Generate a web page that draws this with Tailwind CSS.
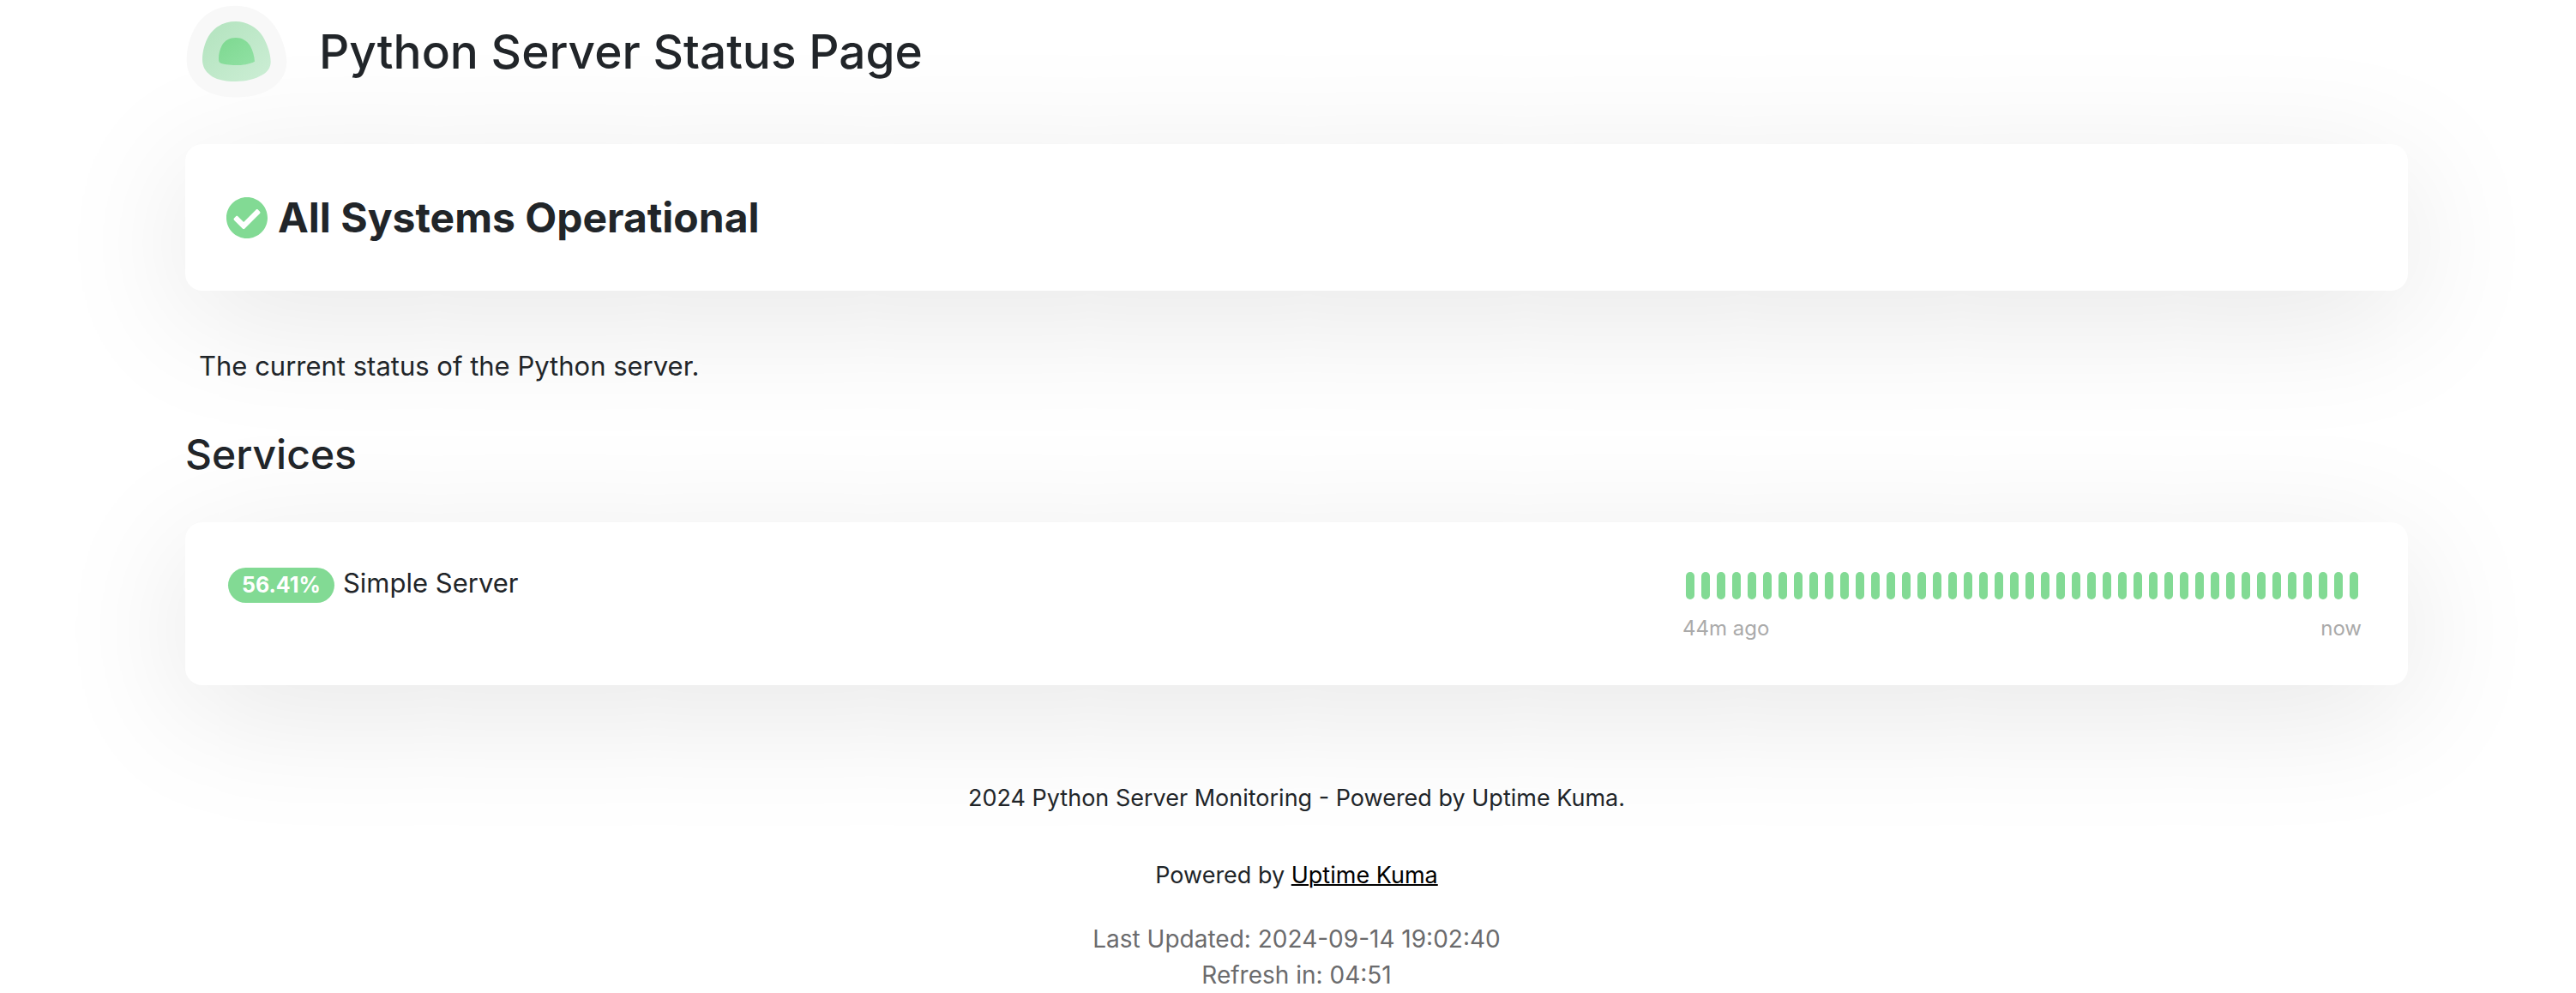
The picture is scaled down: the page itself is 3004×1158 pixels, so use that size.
<!DOCTYPE html>
<html lang="en">
<head>
<meta charset="utf-8">
<meta name="viewport" content="width=device-width, initial-scale=1">
<title>Python Server Status Page</title>
<script src="https://cdn.jsdelivr.net/npm/@tailwindcss/browser@4"></script>
</head>
<body class="bg-white text-[#212529] font-['Inter','Liberation_Sans',sans-serif] pl-5">
<div class="mx-auto max-w-[2640px] px-6">
  <header class="flex items-center gap-9">
    <svg class="size-[120px] shrink-0" viewBox="48 0 360 360" role="img" aria-label="Logo">
      <defs>
        <linearGradient id="mid" x1="0" y1="0" x2="1" y2="1"><stop offset="0.2" stop-color="#b7e5c2"/><stop offset="0.9" stop-color="#caedd3"/></linearGradient>
        <linearGradient id="core" x1="0" y1="0" x2="1" y2="1"><stop offset="0.1" stop-color="#7fd992"/><stop offset="0.9" stop-color="#8fe0a2"/></linearGradient>
      </defs>
      <path fill="#f8f8f8" d="M225 20C280 20 330 45 362 92C385 125 403 180 403 215C403 262 376 295 340 315C305 335 265 340 225 340C165 340 115 326 82 288C62 265 53 240 53 210C53 165 65 125 85 92C118 42 165 20 225 20Z"/>
      <path fill="url(#mid)" d="M225 75C262 75 300 95 320 128C336 155 347 190 347 216C347 236 336 252 318 262C292 278 258 285 225 285C190 285 158 280 136 263C117 249 108 232 108 208C108 180 117 148 130 126C151 92 185 75 225 75Z"/>
      <path fill="url(#core)" d="M225 132C246 132 264 142 275 160C284 176 290 197 291 215C272 225 248 228 225 228C202 228 182 226 170 220C166 218 165 212 165 204C165 190 169 174 176 160C186 141 204 132 225 132Z"/>
    </svg>
    <h1 class="text-[55px] leading-[66px] font-medium">Python Server Status Page</h1>
  </header>

  <main>
    <section class="mt-12 flex items-center gap-3 rounded-[20px] bg-white px-12 py-12 shadow-[0_30px_155px_rgba(0,0,0,0.1)]">
      <svg class="size-12 shrink-0" viewBox="8 8 496 496" fill="#82da94" aria-hidden="true"><path d="M504 256c0 136.967-111.033 248-248 248S8 392.967 8 256 119.033 8 256 8s248 111.033 248 248zM227.314 387.314l184-184c6.248-6.248 6.248-16.379 0-22.627l-22.627-22.627c-6.248-6.249-16.379-6.249-22.628 0L216 308.118l-70.059-70.059c-6.248-6.248-16.379-6.248-22.628 0l-22.627 22.627c-6.248 6.248-6.248 16.379 0 22.627l104 104c6.249 6.249 16.379 6.249 22.628.001z"/></svg>
      <p class="text-[48px] leading-[75px] font-bold">All Systems Operational</p>
    </section>

    <p class="mt-16 pl-4 text-[31px] leading-[48px]">The current status of the Python server.</p>

    <h2 class="mt-12 text-[48px] leading-[62px] font-medium">Services</h2>

    <section class="mt-12 flex items-start justify-between rounded-[20px] bg-white py-12 pl-[50px] pr-[54px] shadow-[0_30px_155px_rgba(0,0,0,0.1)]">
      <div class="flex items-baseline gap-2.5">
        <span class="rounded-full bg-[#82da94] px-4 text-[25px] leading-[41px] font-bold text-white">56.41%</span>
        <span class="text-[31px] leading-[46px]">Simple Server</span>
      </div>
      <div class="pt-[10px]">
        <div id="beats" class="flex gap-2 px-1" role="img" aria-label="Recent checks"></div>
        <div class="mt-4 flex justify-between text-[24px] leading-[36px] text-[#aaaaaa]">
          <span>44m ago</span>
          <span>now</span>
        </div>
      </div>
    </section>
  </main>

  <footer class="mt-[111px] text-center">
    <p class="text-[27px] leading-[42px]">2024 Python Server Monitoring - Powered by Uptime Kuma.</p>
    <p class="mt-12 text-[27px] leading-[42px]">Powered by <a href="#" class="text-black underline decoration-2">Uptime Kuma</a></p>
    <p class="mt-8 text-[28px] leading-[42px] text-[#6b6b6d]">Last Updated: 2024-09-14 19:02:40<br>Refresh in: 04:51</p>
  </footer>
</div>
<script>
  const beats = document.getElementById('beats');
  for (let i = 0; i < 44; i++) {
    const beat = document.createElement('span');
    beat.className = 'h-8 w-2.5 rounded-full bg-[#82da94]';
    beats.append(beat);
  }
</script>
</body>
</html>
